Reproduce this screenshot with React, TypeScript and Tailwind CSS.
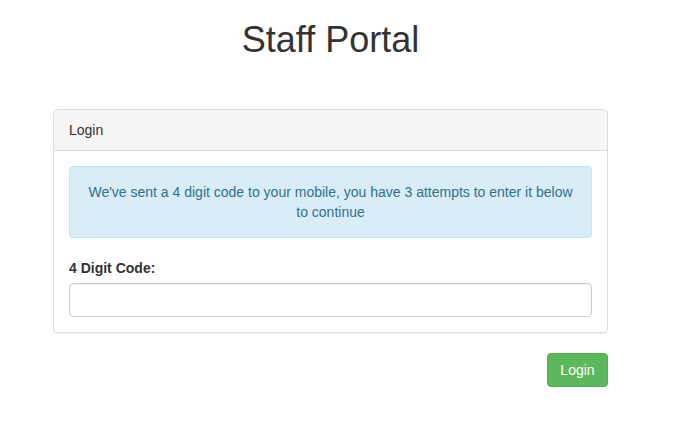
export default function App() {
  return (
    <div className="min-h-[442px] bg-white font-['Liberation_Sans',Arial,sans-serif] text-[14px] leading-[20px] text-[#333]">
      <div className="ml-[53px] w-[555px] pt-[20px]">
        <h1 className="mb-[49px] text-center text-[36px] leading-[40px] font-normal text-[#333]">
          Staff Portal
        </h1>

        <div className="mb-[20px] rounded-[4px] border border-[#ddd] bg-white shadow-[0_1px_1px_rgba(0,0,0,0.05)]">
          <div className="rounded-t-[3px] border-b border-[#ddd] bg-[#f5f5f5] px-[15px] py-[10px]">
            Login
          </div>
          <div className="p-[15px]">
            <div className="mb-[20px] rounded-[4px] border border-[#bce8f1] bg-[#d9edf7] p-[15px] text-center text-[#31708f]">
              We've sent a 4 digit code to your mobile, you have 3 attempts to enter it below to continue
            </div>
            <label className="mb-[5px] block font-bold">4 Digit Code:</label>
            <input
              type="text"
              className="block h-[34px] w-full rounded-[4px] border border-[#ccc] px-[12px] py-[6px] shadow-[inset_0_1px_1px_rgba(0,0,0,0.075)] outline-none"
            />
          </div>
        </div>

        <div className="flex justify-end">
          <button className="h-[34px] w-[61px] rounded-[4px] border border-[#4cae4c] bg-[#5cb85c] text-center text-white">
            Login
          </button>
        </div>
      </div>
    </div>
  );
}
